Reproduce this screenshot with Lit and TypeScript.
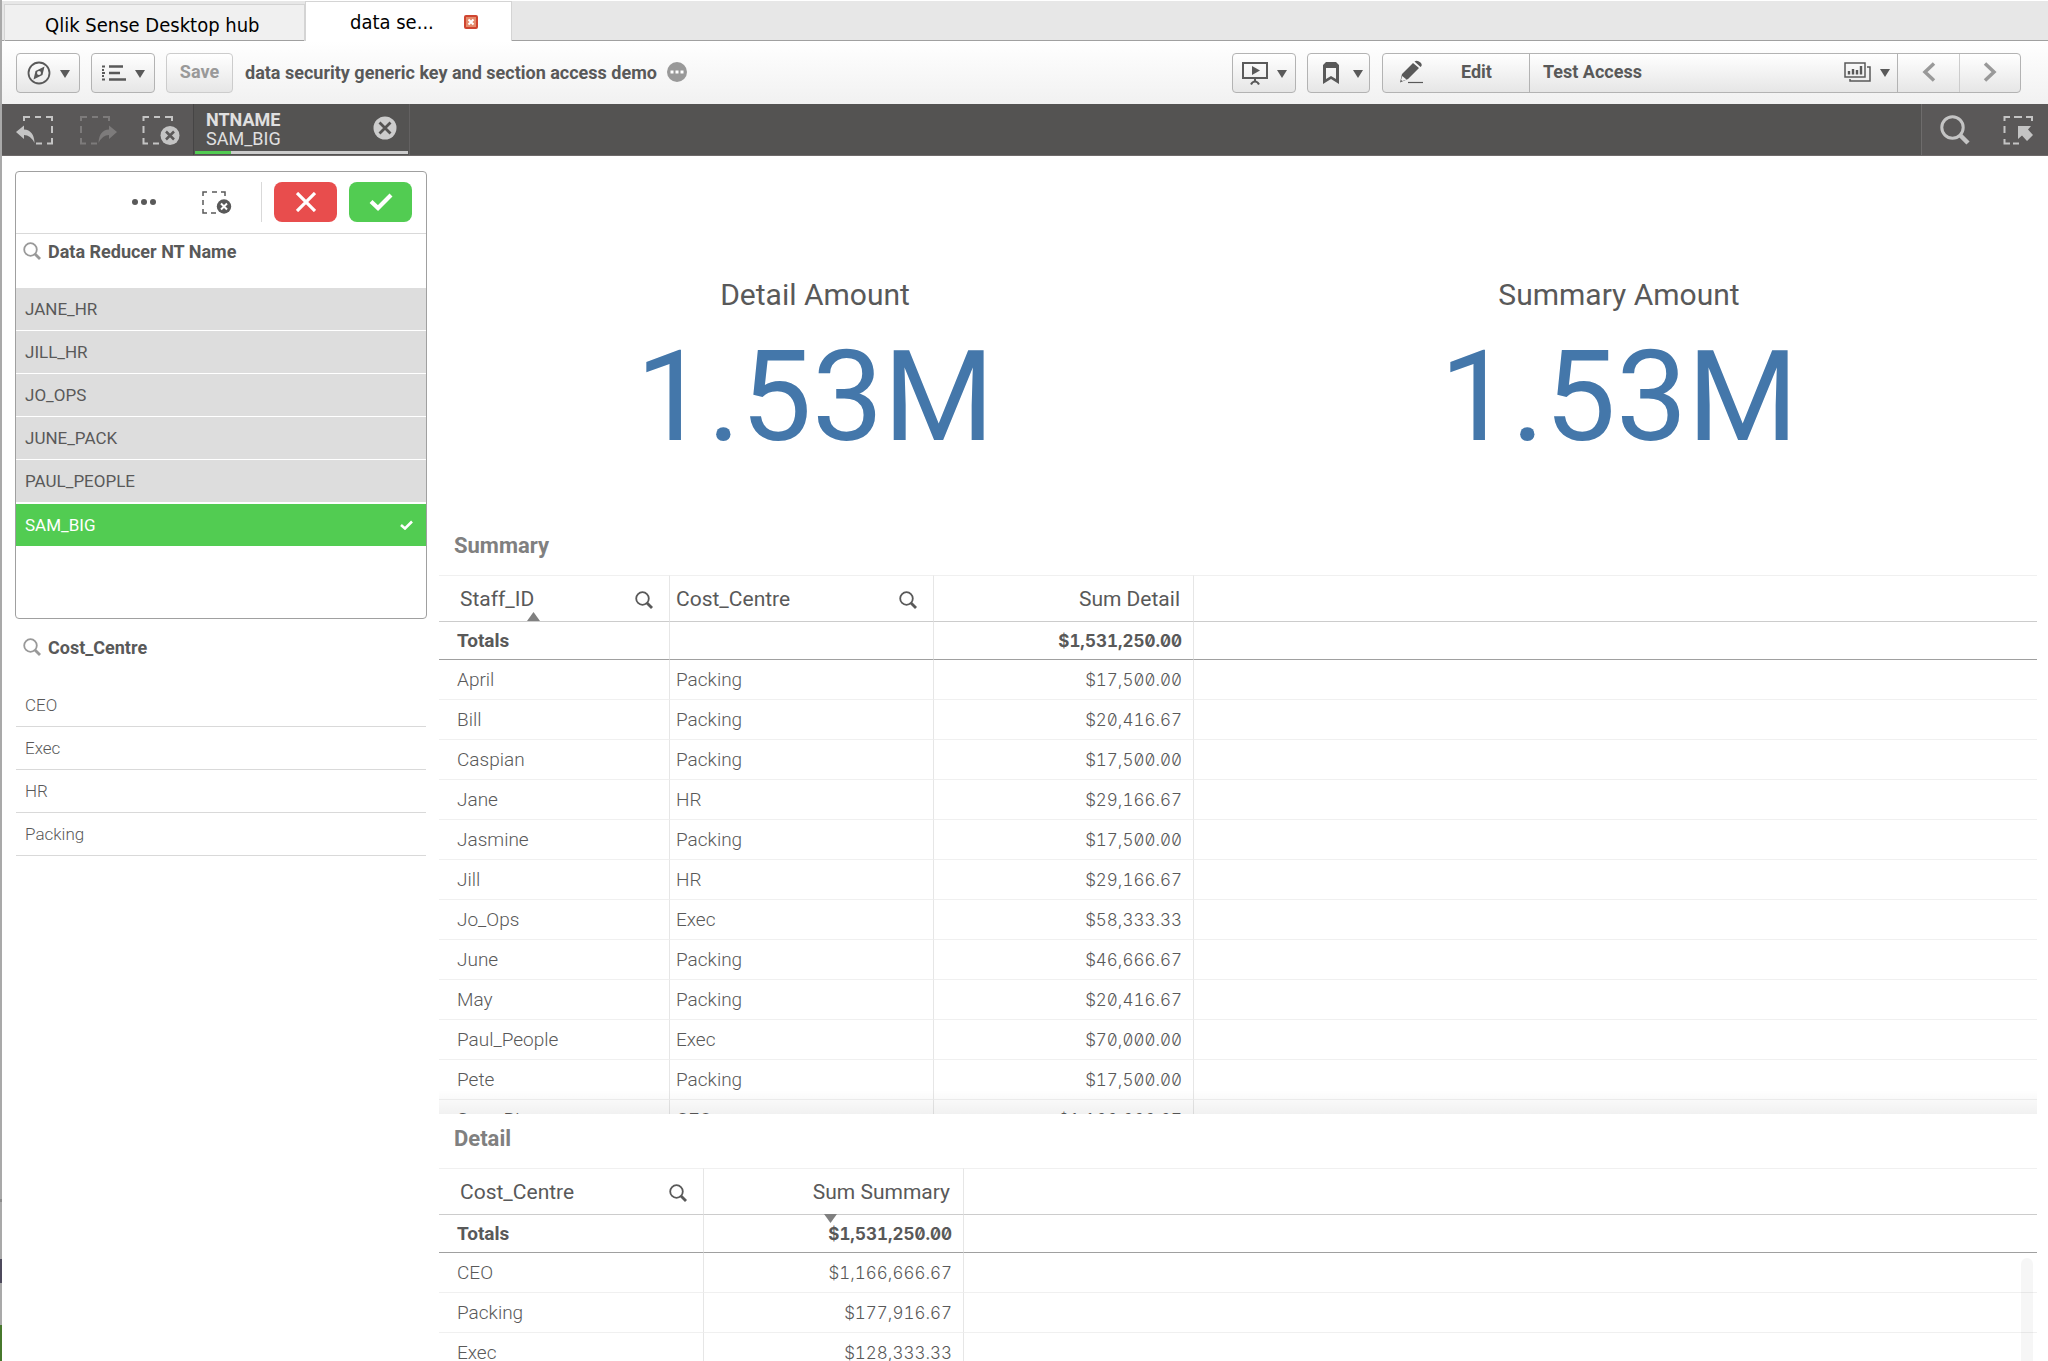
import { LitElement, html, css, svg, nothing, TemplateResult } from "lit";
import { customElement, property, state } from "lit/decorators.js";
import { classMap } from "lit/directives/class-map.js";

type Glyph = { box: string; w: number; h: number; art: TemplateResult };

const glyphs: Record<string, Glyph> = {
  compass: {
    box: "0 0 24 24", w: 24, h: 24,
    art: svg`<circle cx="12" cy="12" r="10.500" fill="none" stroke="currentColor" stroke-width="1.800"/>
      <path fill-rule="evenodd" d="M17.500 5.500L15.500 14L6.500 18.500L8.500 10ZM12 10a2 2 0 1 0 0 4a2 2 0 1 0 0-4Z" fill="currentColor"/>`,
  },
  list: {
    box: "0 0 24 16", w: 24, h: 16,
    art: svg`<path d="M0 1.500H3M0 5H2M0 8H3M0 11H2M0 14.500H3" stroke="currentColor" stroke-width="2"/>
      <path d="M7 1.500H21M7 8H18M7 14.500H24" stroke="currentColor" stroke-width="2.600"/>`,
  },
  caret: { box: "0 0 10 8", w: 10, h: 8, art: svg`<path d="M0 0H10L5 8Z" fill="currentColor"/>` },
  more: {
    box: "0 0 20 20", w: 20, h: 20,
    art: svg`<circle cx="10" cy="10" r="10" fill="currentColor"/><path d="M3.500 8.500h3v3h-3zM8.500 8.500h3v3h-3zM13.500 8.500h3v3h-3z" fill="#fff"/>`,
  },
  present: {
    box: "0 0 26 24", w: 26, h: 24,
    art: svg`<path d="M1 2H25V17H1Z" fill="none" stroke="currentColor" stroke-width="2"/>
      <path d="M10 5L18 9.500L10 14Z" fill="currentColor"/><path d="M13 17V21M9 23.500Q10.500 20.500 13 20.500T17 23.500" fill="none" stroke="currentColor" stroke-width="2"/>`,
  },
  bookmark: {
    box: "0 0 16 22", w: 16, h: 22,
    art: svg`<path fill-rule="evenodd" d="M3 0H13L16 3V22L8 17L0 22V3ZM3 6V17L8 14L13 17V6Z" fill="currentColor"/>`,
  },
  pencil: {
    box: "0 0 24 24", w: 24, h: 24,
    art: svg`<path d="M3 14L14 3L20 8L9 19L1 22.500ZM15.500 1.500Q18 -.500 21.500 2.500Q24 5 21.500 7Z" fill="currentColor"/>
      <path d="M3.200 16L7.500 19.500L3.500 21L2 20Z" fill="#f2f2f2"/><path d="M9 22.500H24" stroke="currentColor" stroke-width="1.200"/>`,
  },
  sheet: {
    box: "0 0 27 20", w: 27, h: 20,
    art: svg`<path d="M1 1H21V15H1Z" fill="none" stroke="currentColor" stroke-width="1.500"/>
      <path d="M23 5H26V19H6V17" fill="none" stroke="currentColor" stroke-width="1.500"/>
      <path d="M5 12.500V9M9 12.500V7M13 12.500V8M17 12.500V4" stroke="currentColor" stroke-width="2.400"/>`,
  },
  prev: { box: "0 0 14 20", w: 14, h: 20, art: svg`<path d="M12 1.500L3 10L12 18.500" fill="none" stroke="currentColor" stroke-width="3.500"/>` },
  next: { box: "0 0 14 20", w: 14, h: 20, art: svg`<path d="M2 1.500L11 10L2 18.500" fill="none" stroke="currentColor" stroke-width="3.500"/>` },
  back: {
    box: "0 0 38 30", w: 38, h: 30,
    art: svg`<path d="M8 6V2H14M19 2H25M30 2H36V6M36 11V18M36 23V28.500H31M26 28.500H20" fill="none" stroke="currentColor" stroke-width="2"/>
      <path d="M0 17L8 10.500V14.500Q18 15 18.500 28Q14.500 20 8 20V24Z" fill="currentColor"/>`,
  },
  forward: {
    box: "0 0 38 30", w: 38, h: 30,
    art: svg`<path d="M2 6V2H8M13 2H19M24 2H30V6M2 11V18M2 23V28.500H7M12 28.500H18" fill="none" stroke="currentColor" stroke-width="2"/>
      <path d="M38 17L30 10.500V14.500Q20 15 19.500 28Q23.500 20 30 20V24Z" fill="currentColor"/>`,
  },
  clear: {
    box: "0 0 38 30", w: 38, h: 30,
    art: svg`<path d="M1.500 6V2H7M12 2H18M23 2H30V6M1.500 11V18M1.500 23V28.500H6M11 28.500H17" fill="none" stroke="currentColor" stroke-width="2"/>
      <circle cx="28" cy="20.500" r="9.500" fill="currentColor"/><path d="M24 16.500L32 24.500M32 16.500L24 24.500" stroke="#5a5858" stroke-width="2.500"/>`,
  },
  remove: {
    box: "0 0 24 24", w: 24, h: 24,
    art: svg`<circle cx="12" cy="12" r="11.500" fill="currentColor"/><path d="M6.500 6.500L17.500 17.500M17.500 6.500L6.500 17.500" stroke="#545352" stroke-width="2.800"/>`,
  },
  search: {
    box: "0 0 30 30", w: 30, h: 30,
    art: svg`<circle cx="12.500" cy="12.500" r="10.700" fill="none" stroke="currentColor" stroke-width="3"/><path d="M19.500 19.500L28 28" stroke="currentColor" stroke-width="4.500"/>`,
  },
  lasso: {
    box: "0 0 30 30", w: 30, h: 30,
    art: svg`<path d="M1.500 6V2H7M11 2H19M23 2H29V6M1.500 11V18M1.500 24V28.500H7M10 28.500H16" fill="none" stroke="currentColor" stroke-width="2"/>
      <path d="M15 11H28L25 14.500L30 20L24 26L19 20.500L15 24Z" fill="currentColor"/>`,
  },
  dots: { box: "0 0 24 6", w: 24, h: 6, art: svg`<circle cx="3" cy="3" r="3" fill="currentColor"/><circle cx="12" cy="3" r="3" fill="currentColor"/><circle cx="21" cy="3" r="3" fill="currentColor"/>` },
  clearSmall: {
    box: "0 0 30 23", w: 30, h: 23,
    art: svg`<path d="M1 5V1H5M10 1H15M19 1H23V5M1 9V14M1 18V22H5M9 22H14" fill="none" stroke="currentColor" stroke-width="1.500"/>
      <circle cx="22" cy="15.500" r="7.200" fill="currentColor"/><path d="M19 12.500L25 18.500M25 12.500L19 18.500" stroke="#fff" stroke-width="2"/>`,
  },
  cross: { box: "0 0 20 20", w: 20, h: 20, art: svg`<path d="M1 1L19 19M19 1L1 19" stroke="currentColor" stroke-width="3.200"/>` },
  check: { box: "0 0 24 18", w: 24, h: 18, art: svg`<path d="M2 8.500L9 15L22 2" fill="none" stroke="currentColor" stroke-width="4.200"/>` },
  checkSmall: { box: "0 0 13 10", w: 13, h: 10, art: svg`<path d="M1 5L5 8.500L12 1.500" fill="none" stroke="currentColor" stroke-width="2.600"/>` },
  magnifier: { box: "0 0 18 18", w: 18, h: 18, art: svg`<circle cx="7.500" cy="7.500" r="6.300" fill="none" stroke="currentColor" stroke-width="1.800"/><path d="M12 12L17 17" stroke="currentColor" stroke-width="2.800"/>` },
  up: { box: "0 0 13 9", w: 13, h: 9, art: svg`<path d="M0 9L6.500 0L13 9Z" fill="currentColor"/>` },
  down: { box: "0 0 13 9", w: 13, h: 9, art: svg`<path d="M0 0H13L6.500 9Z" fill="currentColor"/>` },
  tabClose: {
    box: "0 0 14 14", w: 14, h: 14,
    art: svg`<rect x="1" y="1" width="12" height="12" rx="1" fill="#e58a6b" stroke="#cf4530" stroke-width="2"/><path d="M4.500 4.500L9.500 9.500M9.500 4.500L4.500 9.500" stroke="#fff" stroke-width="2"/>`,
  },
};

const icon = (name: string) => {
  const g = glyphs[name];
  return html`<svg class="icon" viewBox=${g.box} width=${g.w} height=${g.h} aria-hidden="true">${g.art}</svg>`;
};

const base = css`
  * { box-sizing: border-box; }
  button { font: inherit; color: inherit; background: none; border: 0; padding: 0; margin: 0; cursor: pointer; }
  .icon { display: block; flex: none; }
  h2, h3, p, ul { margin: 0; padding: 0; font-size: inherit; }
  ul { list-style: none; }
`;

interface Column { label: string; width: number; numeric?: boolean; sort?: "up" | "down"; searchable?: boolean }

@customElement("data-table")
class DataTable extends LitElement {
  @property() heading = "";
  @property({ attribute: false }) columns: Column[] = [];
  @property({ attribute: false }) totals: string[] = [];
  @property({ attribute: false }) rows: string[][] = [];
  @property({ type: Boolean }) scrollbar = false;

  static styles = [base, css`
    :host { display: block; }
    .title { font-size: 22px; line-height: 30px; font-weight: 700; color: #808080; padding: 8px 15px 14px; }
    .view { position: relative; overflow: hidden; max-height: 539px; margin-bottom: 2px; }
    .shade { position: absolute; left: 0; right: 0; bottom: 0; height: 24px; background: linear-gradient(rgba(0,0,0,0), rgba(0,0,0,.055)); }
    .track { position: absolute; right: 4px; top: 90px; bottom: 0; width: 12px; border-radius: 6px 6px 0 0; background: rgba(0,0,0,.035); }
    table { width: 100%; table-layout: fixed; border-collapse: separate; border-spacing: 0; color: #595959; font-size: 19px; line-height: 24px; }
    th, td { padding: 0 6px; text-align: left; white-space: nowrap; border-right: 1px solid #e6e6e6; border-bottom: 1px solid #f0f0f0; }
    th:first-child, td:first-child { padding-left: 18px; }
    th:last-child, td:last-child { border-right: 0; }
    thead .heads th { height: 47px; font-size: 21px; font-weight: 400; border-top: 1px solid #f0f0f0; border-bottom-color: #ccc; }
    .heads th:first-child { padding-left: 21px; }
    thead .totals th { height: 38px; font-weight: 700; border-bottom-color: #a0a0a0; }
    td { height: 40px; font-weight: 300; }
    .head { position: relative; display: flex; align-items: center; justify-content: space-between; height: 45px; }
    .head .find { padding: 3px 10px 0; }
    .numeric .head { justify-content: flex-end; padding-right: 6px; }
    th.numeric, td.numeric { text-align: right; padding-right: 11px; font-family: Inter, Roboto, sans-serif; font-size: 17px; font-feature-settings: "zero", "tnum"; }
    .heads th.numeric { padding-right: 7px; font-family: inherit; font-size: 21px; }
    .sort { position: absolute; color: #808080; }
    .sort.up { left: 67px; bottom: 0; }
    .sort.down { right: 119px; bottom: -9px; }
  `];

  render() {
    return html`
      <h2 class="title">${this.heading}</h2>
      <div class="view">
        <table aria-label=${this.heading}>
          <colgroup>${this.columns.map((c) => html`<col style="width:${c.width}px">`)}<col></colgroup>
          <thead>
            <tr class="heads">
              ${this.columns.map((c) => html`<th scope="col" class=${classMap({ numeric: !!c.numeric })}>
                <div class="head">
                  <button>${c.label}</button>
                  ${c.searchable ? html`<button class="find" aria-label="Search ${c.label}">${icon("magnifier")}</button>` : nothing}
                  ${c.sort ? html`<span class="sort ${c.sort}">${icon(c.sort)}</span>` : nothing}
                </div></th>`)}
              <th></th>
            </tr>
            <tr class="totals">
              ${this.totals.map((t, i) => html`<th class=${classMap({ numeric: !!this.columns[i].numeric })}>${t}</th>`)}<th></th>
            </tr>
          </thead>
          <tbody>
            ${this.rows.map((r) => html`<tr>${r.map((v, i) => html`<td class=${classMap({ numeric: !!this.columns[i].numeric })}>${v}</td>`)}<td></td></tr>`)}
          </tbody>
        </table>
        ${this.scrollbar ? html`<div class="track"></div>` : html`<div class="shade"></div>`}
      </div>`;
  }
}

@customElement("list-box")
class ListBox extends LitElement {
  @property() heading = "";
  @property({ attribute: false }) items: string[] = [];
  @property() selected = "";
  @property({ type: Boolean }) active = false;

  static styles = [base, css`
    :host { display: block; }
    .box { color: #595959; border: 1px solid transparent; border-radius: 4px; }
    .box.active { border-color: #a0a0a0; min-height: 448px; }
    .tools { display: flex; align-items: center; justify-content: flex-end; height: 62px; padding: 0 14px 1px 0; border-bottom: 1px solid #d9d9d9; color: #595959; }
    .dots { padding: 10px; }
    .clear { padding: 8px; margin-left: 28px; }
    .split { width: 1px; height: 40px; background: #d9d9d9; margin-left: 21px; }
    .act { display: grid; place-items: center; width: 63px; height: 40px; margin-left: 12px; border-radius: 8px; color: #fff; }
    .no { background: #e84d4d; }
    .yes { background: #52cc52; }
    .title { display: flex; align-items: center; gap: 7px; height: 54px; padding: 0 7px 20px; font-size: 18px; font-weight: 700; }
    .title .find { color: #999; }
    .item { display: flex; align-items: center; justify-content: space-between; width: 100%; height: 43px; padding: 0 13px 0 9px; font-size: 17px; font-weight: 300; text-align: left; border-bottom: 1px solid #d9d9d9; }
    .active .item { background: #ddd; border-bottom-color: #fff; font-weight: 400; }
    .active .item.on { height: 44px; background: #52cc52; color: #fff; border-top: 1px solid #fff; }
  `];

  render() {
    return html`<section class=${classMap({ box: true, active: this.active })}>
      ${this.active ? html`<div class="tools">
        <button class="dots" aria-label="More options">${icon("dots")}</button>
        <button class="clear" aria-label="Clear selection">${icon("clearSmall")}</button>
        <span class="split"></span>
        <button class="act no" aria-label="Cancel selection">${icon("cross")}</button>
        <button class="act yes" aria-label="Confirm selection">${icon("check")}</button>
      </div>` : nothing}
      <h3 class="title"><button class="find" aria-label="Search ${this.heading}">${icon("magnifier")}</button>${this.heading}</h3>
      <ul>${this.items.map((v) => html`<li><button class=${classMap({ item: true, on: v === this.selected })}>
        ${v}${v === this.selected ? icon("checkSmall") : nothing}</button></li>`)}</ul>
    </section>`;
  }
}

@customElement("app-root")
class AppRoot extends LitElement {
  @state() names = ["JANE_HR", "JILL_HR", "JO_OPS", "JUNE_PACK", "PAUL_PEOPLE", "SAM_BIG"];
  @state() centres = ["CEO", "Exec", "HR", "Packing"];

  summaryColumns: Column[] = [
    { label: "Staff_ID", width: 231, sort: "up", searchable: true },
    { label: "Cost_Centre", width: 264, searchable: true },
    { label: "Sum Detail", width: 260, numeric: true },
  ];
  summaryRows = [
    ["April", "Packing", "$17,500.00"],
    ["Bill", "Packing", "$20,416.67"],
    ["Caspian", "Packing", "$17,500.00"],
    ["Jane", "HR", "$29,166.67"],
    ["Jasmine", "Packing", "$17,500.00"],
    ["Jill", "HR", "$29,166.67"],
    ["Jo_Ops", "Exec", "$58,333.33"],
    ["June", "Packing", "$46,666.67"],
    ["May", "Packing", "$20,416.67"],
    ["Paul_People", "Exec", "$70,000.00"],
    ["Pete", "Packing", "$17,500.00"],
    ["Sam_Big", "CEO", "$1,166,666.67"],
  ];
  detailColumns: Column[] = [
    { label: "Cost_Centre", width: 265, searchable: true },
    { label: "Sum Summary", width: 260, numeric: true, sort: "down" },
  ];
  detailRows = [
    ["CEO", "$1,166,666.67"],
    ["Packing", "$177,916.67"],
    ["Exec", "$128,333.33"],
    ["HR", "$58,333.33"],
  ];

  static styles = [base, css`
    :host { display: block; height: 100vh; overflow: hidden; font-family: Roboto, "Noto Sans", sans-serif; color: #595959; background: #fff; }
    .window { display: grid; grid-template-columns: 2px minmax(0, 1fr); }
    .edge { background: linear-gradient(#a9a9a9 1199px, #8c8c8c 1199px 1202px, #a9a9a9 1202px 1259px, #4d4a5c 1259px 1283px, #a9a9a9 1283px 1325px, #47782c 1325px); }
    .tabs { display: flex; align-items: flex-end; height: 41px; padding-left: 2px; background: #e7e7e7; border-top: 1px solid #fff; box-shadow: inset 0 -1px #a0a0a0; font-family: "DejaVu Sans Condensed", "Noto Sans", sans-serif; font-size: 20px; line-height: 26px; color: #000; }
    .tab { display: flex; align-items: center; border: 1px solid #d4d4d4; border-bottom: 0; }
    .hub { width: 301px; height: 37px; padding: 3px 0 0 40px; background: #f0f0f0; box-shadow: inset 0 -1px #a0a0a0; }
    .open { width: 207px; height: 40px; padding-left: 44px; background: #fff; }
    .tab button + button { margin-left: 30px; }
    .bar { display: flex; align-items: center; height: 63px; padding: 0 27px 0 14px; background: linear-gradient(#fff, #f1f1f1); font-size: 18px; font-weight: 700; }
    .btn { display: flex; align-items: center; justify-content: center; gap: 9px; height: 40px; width: 64px; margin-right: 11px; border: 1px solid #b3b3b3; border-radius: 4px; background: linear-gradient(#fff, #e6e6e6); }
    .btn.save { width: 67px; margin-right: 12px; padding-bottom: 2px; color: #999; border-color: #ccc; }
    .btn .icon + .icon, .sheetname .icon + .icon { margin-top: 2px; }
    .btn.mark { gap: 14px; width: 63px; margin-right: 12px; padding-left: 8px; }
    .about { margin-left: 10px; padding-bottom: 2px; color: #999; }
    .spring { flex: 1; }
    .group { display: flex; height: 40px; border: 1px solid #b3b3b3; border-radius: 4px; background: linear-gradient(#fff, #e6e6e6); }
    .edit { display: flex; align-items: center; gap: 38px; width: 147px; padding: 0 0 2px 16px; border-right: 1px solid #b3b3b3; }
    .sheetname { display: flex; align-items: center; gap: 9px; width: 368px; padding: 0 7px 2px 13px; border-right: 1px solid #b3b3b3; }
    .step { display: grid; place-items: center; width: 61px; padding-bottom: 2px; color: #999; }
    .step + .step { border-left: 1px solid #ccc; }
    .selections { display: flex; height: 52px; background: #545352; border-bottom: 1px solid #6e6a6a; color: #c4c4c4; }
    .history { display: flex; align-items: center; gap: 25px; width: 192px; padding-left: 14px; background: #5a5858; border-right: 1px solid #464545; }
    .off { color: #7d7b7b; }
    .field { display: flex; flex-direction: column; width: 216px; border-right: 1px solid #636161; padding-left: 1px; }
    .about-field { flex: 1; display: flex; align-items: center; justify-content: space-between; padding: 2px 12px 0 11px; color: #e0e0e0; font-size: 18px; line-height: 19px; }
    .about-field button { color: #ccc; padding-bottom: 2px; }
    .meter { display: flex; height: 3px; margin: 0 1px 1px 0; background: #ccc; }
    .meter span { width: 17%; background: #52cc52; }
    .finders { display: flex; align-items: center; gap: 33px; padding: 0 15px 0 18px; background: #5a5858; border-left: 1px solid #6e6c6c; }
    .sheet { display: grid; grid-template-columns: 412px minmax(0, 1fr); gap: 12px; padding: 15px 11px 0 13px; }
    aside { display: flex; flex-direction: column; gap: 10px; }
    .kpis { display: grid; grid-template-columns: 1fr 1fr; gap: 52px; height: 352px; padding: 104px 42px 0 0; text-align: center; }
    .kpis h3 { font-size: 30px; line-height: 40px; font-weight: 400; }
    .kpis p { font-size: 127px; line-height: 164px; color: #4477aa; }
  `];

  render() {
    return html`<div class="window">
      <div class="edge"></div>
      <div>
        <nav class="tabs" aria-label="Open documents">
          <div class="tab hub"><button>Qlik Sense Desktop hub</button></div>
          <div class="tab open"><button>data se...</button><button aria-label="Close tab">${icon("tabClose")}</button></div>
        </nav>
        <header class="bar">
          <button class="btn" aria-label="Navigation">${icon("compass")}${icon("caret")}</button>
          <button class="btn" aria-label="Menu">${icon("list")}${icon("caret")}</button>
          <button class="btn save">Save</button>
          <span>data security generic key and section access demo</span>
          <button class="about" aria-label="App details">${icon("more")}</button>
          <span class="spring"></span>
          <button class="btn" aria-label="Storytelling">${icon("present")}${icon("caret")}</button>
          <button class="btn mark" aria-label="Bookmarks">${icon("bookmark")}${icon("caret")}</button>
          <div class="group">
            <button class="edit">${icon("pencil")}Edit</button>
            <button class="sheetname">Test Access<span class="spring"></span>${icon("sheet")}${icon("caret")}</button>
            <button class="step" aria-label="Previous sheet">${icon("prev")}</button>
            <button class="step" aria-label="Next sheet">${icon("next")}</button>
          </div>
        </header>
        <div class="selections">
          <div class="history">
            <button aria-label="Step back">${icon("back")}</button>
            <button class="off" aria-label="Step forward">${icon("forward")}</button>
            <button aria-label="Clear all selections">${icon("clear")}</button>
          </div>
          <div class="field">
            <div class="about-field"><div><b>NTNAME</b><br>SAM_BIG</div><button aria-label="Clear NTNAME">${icon("remove")}</button></div>
            <div class="meter"><span></span></div>
          </div>
          <span class="spring"></span>
          <div class="finders">
            <button aria-label="Smart search">${icon("search")}</button>
            <button aria-label="Selections tool">${icon("lasso")}</button>
          </div>
        </div>
        <main class="sheet">
          <aside>
            <list-box active heading="Data Reducer NT Name" .items=${this.names} selected="SAM_BIG"></list-box>
            <list-box heading="Cost_Centre" .items=${this.centres}></list-box>
          </aside>
          <div>
            <div class="kpis">
              <section><h3>Detail Amount</h3><p>1.53M</p></section>
              <section><h3>Summary Amount</h3><p>1.53M</p></section>
            </div>
            <data-table heading="Summary" .columns=${this.summaryColumns} .totals=${["Totals", "", "$1,531,250.00"]} .rows=${this.summaryRows}></data-table>
            <data-table scrollbar heading="Detail" .columns=${this.detailColumns} .totals=${["Totals", "$1,531,250.00"]} .rows=${this.detailRows}></data-table>
          </div>
        </main>
      </div>
    </div>`;
  }
}
